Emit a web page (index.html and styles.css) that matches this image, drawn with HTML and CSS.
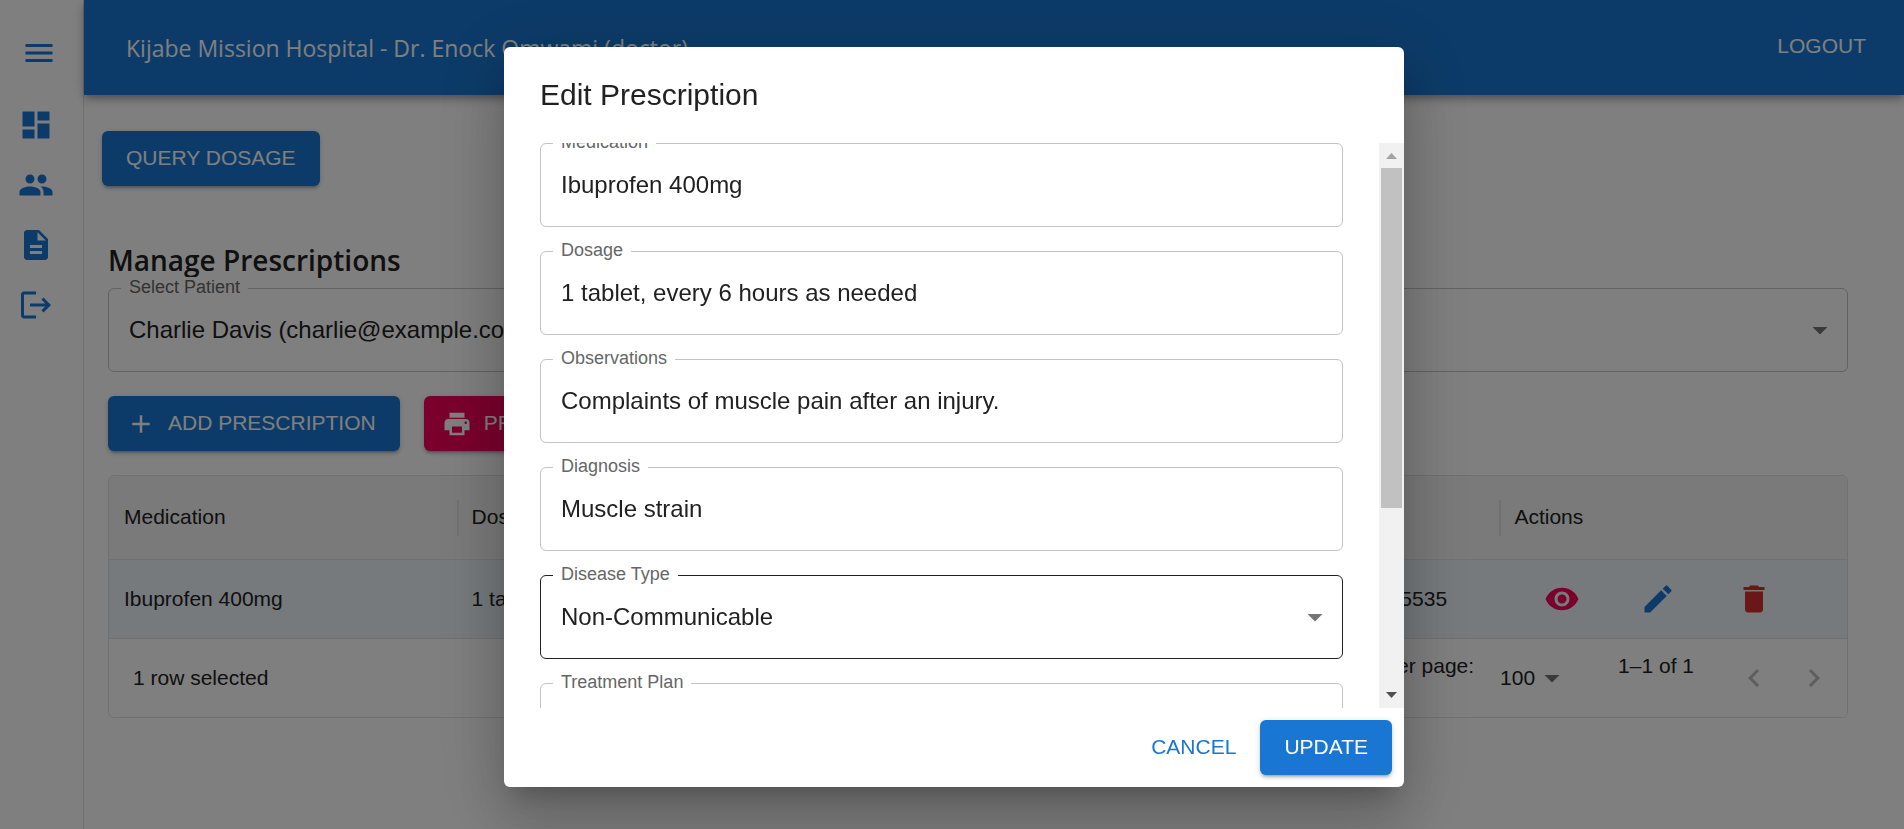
FILE: index.html
```html
<!DOCTYPE html>
<html lang="en">
<head>
<meta charset="utf-8">
<title>Kijabe Mission Hospital</title>
<link rel="stylesheet" href="styles.css">
</head>
<body>
<svg class="sprite" aria-hidden="true">
  <symbol id="i-menu" viewBox="0 0 24 24"><path d="M3 18h18v-2H3v2zm0-5h18v-2H3v2zm0-7v2h18V6H3z"/></symbol>
  <symbol id="i-dashboard" viewBox="0 0 24 24"><path d="M3 13h8V3H3v10zm0 8h8v-6H3v6zm10 0h8V11h-8v10zm0-18v6h8V3h-8z"/></symbol>
  <symbol id="i-people" viewBox="0 0 24 24"><path d="M16 11c1.66 0 2.99-1.34 2.99-3S17.66 5 16 5c-1.66 0-3 1.34-3 3s1.34 3 3 3zm-8 0c1.66 0 2.99-1.34 2.99-3S9.66 5 8 5C6.34 5 5 6.34 5 8s1.34 3 3 3zm0 2c-2.33 0-7 1.17-7 3.5V19h14v-2.5c0-2.33-4.67-3.5-7-3.5zm8 0c-.29 0-.62.02-.97.05 1.16.84 1.97 1.97 1.97 3.45V19h6v-2.5c0-2.33-4.67-3.5-7-3.5z"/></symbol>
  <symbol id="i-description" viewBox="0 0 24 24"><path d="M14 2H6c-1.1 0-1.99.9-1.99 2L4 20c0 1.1.89 2 1.99 2H18c1.1 0 2-.9 2-2V8l-6-6zm2 16H8v-2h8v2zm0-4H8v-2h8v2zm-3-5V3.500L18.500 9H13z"/></symbol>
  <symbol id="i-logout" viewBox="0 0 24 24"><path d="m17 7-1.410 1.410L18.170 11H8v2h10.170l-2.580 2.580L17 17l5-5zM4 5h8V3H4c-1.100 0-2 .9-2 2v14c0 1.100.9 2 2 2h8v-2H4z"/></symbol>
  <symbol id="i-add" viewBox="0 0 24 24"><path d="M19 13h-6v6h-2v-6H5v-2h6V5h2v6h6v2z"/></symbol>
  <symbol id="i-print" viewBox="0 0 24 24"><path d="M19 8H5c-1.660 0-3 1.340-3 3v6h4v4h12v-4h4v-6c0-1.660-1.340-3-3-3zm-3 11H8v-5h8v5zm3-7c-.55 0-1-.45-1-1s.45-1 1-1 1 .45 1 1-.45 1-1 1zm-1-9H6v4h12V3z"/></symbol>
  <symbol id="i-eye" viewBox="0 0 24 24"><path d="M12 4.500C7 4.500 2.730 7.610 1 12c1.730 4.390 6 7.500 11 7.500s9.270-3.110 11-7.500c-1.730-4.390-6-7.500-11-7.500zM12 17c-2.760 0-5-2.240-5-5s2.240-5 5-5 5 2.240 5 5-2.240 5-5 5zm0-8c-1.660 0-3 1.340-3 3s1.340 3 3 3 3-1.340 3-3-1.340-3-3-3z"/></symbol>
  <symbol id="i-edit" viewBox="0 0 24 24"><path d="M3 17.250V21h3.750L17.810 9.940l-3.750-3.750L3 17.250zM20.710 7.040c.39-.39.39-1.020 0-1.410l-2.340-2.340c-.39-.39-1.020-.39-1.410 0l-1.830 1.830 3.750 3.750 1.830-1.830z"/></symbol>
  <symbol id="i-delete" viewBox="0 0 24 24"><path d="M6 19c0 1.100.9 2 2 2h8c1.100 0 2-.9 2-2V7H6v12zM19 4h-3.500l-1-1h-5l-1 1H5v2h14V4z"/></symbol>
  <symbol id="i-down" viewBox="0 0 24 24"><path d="m7 10 5 5 5-5z"/></symbol>
  <symbol id="i-prev" viewBox="0 0 24 24"><path d="M15.410 16.590 10.830 12l4.580-4.590L14 6l-6 6 6 6z"/></symbol>
  <symbol id="i-next" viewBox="0 0 24 24"><path d="M8.590 16.590 13.170 12 8.590 7.410 10 6l6 6-6 6z"/></symbol>
</svg>

<div class="app">
  <aside class="sidebar">
    <button class="side-menu" aria-label="Toggle menu"><svg class="icon"><use href="#i-menu"/></svg></button>
    <nav class="side-nav">
      <a href="#" aria-label="Dashboard"><svg class="icon"><use href="#i-dashboard"/></svg></a>
      <a href="#" aria-label="Patients"><svg class="icon"><use href="#i-people"/></svg></a>
      <a href="#" aria-label="Prescriptions"><svg class="icon"><use href="#i-description"/></svg></a>
      <a href="#" aria-label="Logout"><svg class="icon"><use href="#i-logout"/></svg></a>
    </nav>
  </aside>

  <div class="page">
    <header class="appbar">
      <h1 class="appbar-title">Kijabe Mission Hospital - Dr. Enock Omwami (doctor)</h1>
      <button class="btn-text btn-logout">LOGOUT</button>
    </header>

    <main class="main">
      <button class="btn btn-query">QUERY DOSAGE</button>

      <section class="manage">
        <h2 class="manage-title">Manage Prescriptions</h2>

        <div class="field">
          <label class="field-label" for="patient">Select Patient</label>
          <select class="field-input" id="patient"><option>Charlie Davis (charlie@example.com)</option></select>
          <svg class="icon field-arrow"><use href="#i-down"/></svg>
        </div>

        <div class="toolbar">
          <button class="btn btn-icon"><svg class="icon-sm"><use href="#i-add"/></svg><span>ADD PRESCRIPTION</span></button>
          <button class="btn btn-icon btn-pink"><svg class="icon-sm"><use href="#i-print"/></svg><span>PRINT</span></button>
        </div>

        <div class="grid">
          <table class="grid-table">
            <thead>
              <tr><th>Medication</th><th>Dosage</th><th>Diagnosis</th><th>Patient</th><th>Actions</th></tr>
            </thead>
            <tbody>
              <tr>
                <td>Ibuprofen 400mg</td>
                <td>1 tablet, every 6 hours as needed</td>
                <td>Muscle strain</td>
                <td>670000000000000000005535</td>
                <td>
                  <div class="actions">
                    <button class="act act-view" aria-label="View"><svg class="icon"><use href="#i-eye"/></svg></button>
                    <button class="act act-edit" aria-label="Edit"><svg class="icon"><use href="#i-edit"/></svg></button>
                    <button class="act act-delete" aria-label="Delete"><svg class="icon"><use href="#i-delete"/></svg></button>
                  </div>
                </td>
              </tr>
            </tbody>
          </table>
          <div class="grid-footer">
            <span class="grid-count">1 row selected</span>
            <div class="pager">
              <label class="pager-text" for="rows">Rows per page:</label>
              <div class="pager-size">
                <select id="rows"><option>100</option></select>
                <svg class="icon pager-arrow"><use href="#i-down"/></svg>
              </div>
              <p class="pager-text pager-range">1–1 of 1</p>
              <button class="pager-btn" disabled aria-label="Previous page"><svg class="icon"><use href="#i-prev"/></svg></button>
              <button class="pager-btn" disabled aria-label="Next page"><svg class="icon"><use href="#i-next"/></svg></button>
            </div>
          </div>
        </div>
      </section>
    </main>
  </div>
</div>

<div class="backdrop">
  <div class="dialog" role="dialog" aria-modal="true" aria-labelledby="dialog-title">
    <h2 class="dialog-title" id="dialog-title">Edit Prescription</h2>
    <div class="dialog-body">
      <form class="dialog-form">
        <div class="field">
          <label class="field-label" for="medication">Medication</label>
          <input class="field-input" id="medication" type="text" value="Ibuprofen 400mg">
        </div>
        <div class="field">
          <label class="field-label" for="dosage">Dosage</label>
          <input class="field-input" id="dosage" type="text" value="1 tablet, every 6 hours as needed">
        </div>
        <div class="field">
          <label class="field-label" for="observations">Observations</label>
          <input class="field-input" id="observations" type="text" value="Complaints of muscle pain after an injury.">
        </div>
        <div class="field">
          <label class="field-label" for="diagnosis">Diagnosis</label>
          <input class="field-input" id="diagnosis" type="text" value="Muscle strain">
        </div>
        <div class="field field-active">
          <label class="field-label" for="disease">Disease Type</label>
          <select class="field-input" id="disease"><option>Non-Communicable</option></select>
          <svg class="icon field-arrow"><use href="#i-down"/></svg>
        </div>
        <div class="field">
          <label class="field-label" for="plan">Treatment Plan</label>
          <input class="field-input" id="plan" type="text">
        </div>
      </form>
      <div class="scrollbar" aria-hidden="true">
        <svg class="scroll-arrow scroll-up" viewBox="0 0 25 25"><path d="M7 16l5.500-6 5.500 6z"/></svg>
        <div class="scroll-track"><div class="scroll-thumb"></div></div>
        <svg class="scroll-arrow scroll-down" viewBox="0 0 25 25"><path d="M7 9h11l-5.500 6z"/></svg>
      </div>
    </div>
    <div class="dialog-actions">
      <button class="btn-text">CANCEL</button>
      <button class="btn">UPDATE</button>
    </div>
  </div>
</div>
</body>
</html>
```
FILE: styles.css
```css
* { box-sizing: border-box; }

body {
  margin: 0;
  background: #fff;
  color: #212121;
  font-family: "Liberation Sans", Arial, sans-serif;
  font-size: 21px;
}

h1, h2, p { margin: 0; }

button, input, select { font: inherit; color: inherit; }

button {
  border: 0;
  padding: 0;
  background: none;
}

.sprite {
  position: absolute;
  width: 0;
  height: 0;
}

.icon, .icon-sm {
  display: block;
  flex: none;
  width: 36px;
  height: 36px;
  fill: currentColor;
}

.icon-sm {
  width: 30px;
  height: 30px;
}

.app {
  display: flex;
  min-height: 100vh;
}

.sidebar {
  flex: none;
  width: 84px;
  padding-top: 35px;
  border-right: 1px solid #e0e0e0;
  color: #1976d2;
}

.side-menu {
  display: block;
  margin: 0 0 24px 21px;
}

.side-nav a {
  display: flex;
  align-items: center;
  height: 60px;
  padding-left: 18px;
  color: inherit;
}

.page {
  flex: 1;
  min-width: 0;
}

.appbar {
  display: flex;
  align-items: center;
  justify-content: space-between;
  height: 95px;
  padding: 0 24px 0 42px;
  background: #1976d2;
  color: #fff;
  box-shadow: 0 3px 6px -1px rgba(0, 0, 0, .2), 0 6px 8px rgba(0, 0, 0, .14), 0 1px 15px rgba(0, 0, 0, .12);
}

.appbar-title {
  font-family: "Segoe UI", "Open Sans", "Noto Sans", sans-serif;
  font-size: 23px;
  font-weight: 400;
  line-height: 36px;
}

.btn, .btn-text {
  display: inline-flex;
  align-items: center;
  justify-content: center;
  height: 55px;
  min-width: 96px;
  border-radius: 6px;
  white-space: nowrap;
}

.btn {
  padding: 0 24px 2px;
  background: #1976d2;
  color: #fff;
  box-shadow: 0 4px 2px -3px rgba(0, 0, 0, .2), 0 3px 3px rgba(0, 0, 0, .14), 0 1px 7px rgba(0, 0, 0, .12);
}

.btn-text {
  padding: 0 12px 2px;
  color: #1976d2;
}

.btn-logout {
  padding: 0 14px 3px;
  color: inherit;
}

.btn-icon {
  gap: 12px;
  padding: 0 24px 0 18px;
}

.btn-icon span { padding-bottom: 2px; }

.btn-pink { background: #f50057; }

.main { padding: 36px 18px; }

.manage { padding: 54px 38px 24px 6px; }

.manage-title {
  padding-top: 2px;
  margin-bottom: 10px;
  font-family: "Segoe UI", "Open Sans", "Noto Sans", sans-serif;
  font-size: 28px;
  font-weight: 600;
  line-height: 36px;
}

.field {
  position: relative;
  background: #fff;
}

.field-label {
  position: absolute;
  top: -11px;
  left: 13px;
  padding: 0 8px;
  background: #fff;
  color: #666;
  font-size: 18px;
  line-height: 20px;
}

.field-input {
  display: block;
  width: 100%;
  height: 84px;
  padding: 0 20px;
  border: 1px solid #c4c4c4;
  border-radius: 6px;
  background: transparent;
  font-size: 24px;
  appearance: none;
  outline: 0;
}

select.field-input { padding-bottom: 2px; }

.field-active .field-input { border-color: #212121; }

.field-arrow {
  position: absolute;
  top: 24px;
  right: 10px;
  color: #757575;
  pointer-events: none;
}

.toolbar {
  display: flex;
  gap: 24px;
  margin: 24px 0;
}

.grid {
  border: 1px solid #e0e0e0;
  border-radius: 6px;
  overflow: hidden;
}

.grid-table {
  width: 100%;
  table-layout: fixed;
  border-collapse: separate;
  border-spacing: 0;
}

.grid-table th, .grid-table td {
  padding: 0 15px;
  border-bottom: 1px solid #e0e0e0;
  text-align: left;
  font-weight: 400;
  white-space: nowrap;
  overflow: hidden;
  text-overflow: ellipsis;
}

.grid-table th {
  height: 84px;
  padding-bottom: 1px;
  background: #f5f5f5;
}

.grid-table th + th {
  background: linear-gradient(#e0e0e0, #e0e0e0) left center / 2px 36px no-repeat #f5f5f5;
}

.grid-table td {
  height: 79px;
  background: #edf4fb;
}

.actions { display: flex; }

.act {
  display: flex;
  justify-content: center;
  width: 96px;
}

.act-view { color: #f50057; }
.act-edit { color: #1976d2; }
.act-delete { color: #d32f2f; }

.grid-footer {
  display: flex;
  align-items: center;
  justify-content: space-between;
  height: 78px;
  padding: 0 3px 0 24px;
}

.grid-count { padding-bottom: 1px; }

.pager {
  display: flex;
  align-items: center;
}

.pager-text { padding-bottom: 25px; }

.pager-size {
  position: relative;
  margin: 0 42px 0 14px;
}

.pager-size select {
  display: block;
  width: 88px;
  height: 36px;
  padding: 0 12px 1px;
  border: 0;
  background: transparent;
  appearance: none;
}

.pager-arrow {
  position: absolute;
  top: 0;
  right: 6px;
  color: #757575;
  pointer-events: none;
}

.pager-range { padding-right: 30px; }

.pager-btn {
  display: flex;
  justify-content: center;
  width: 60px;
  padding: 12px 0;
  color: #bdbdbd;
}

.backdrop {
  position: fixed;
  inset: 0;
  display: flex;
  justify-content: center;
  padding: 47px 48px 42px;
  background: rgba(0, 0, 0, .5);
}

.dialog {
  display: flex;
  flex-direction: column;
  width: 100%;
  max-width: 900px;
  margin-right: -4px;
  border-radius: 6px;
  background: #fff;
  box-shadow: 0 16px 22px -10px rgba(0, 0, 0, .2), 0 36px 57px 4px rgba(0, 0, 0, .14), 0 14px 69px 12px rgba(0, 0, 0, .12);
}

.dialog-title {
  padding: 24px 36px;
  font-size: 30px;
  font-weight: 400;
  line-height: 48px;
}

.dialog-body {
  display: flex;
  flex: 1;
  min-height: 0;
}

.dialog-form {
  display: flex;
  flex: 1;
  flex-direction: column;
  gap: 24px;
  padding: 0 36px 30px;
  overflow-y: auto;
  scrollbar-width: none;
}

.scrollbar {
  display: flex;
  flex-direction: column;
  width: 25px;
  background: #f1f1f1;
}

.scroll-arrow {
  display: block;
  width: 25px;
  height: 25px;
}

.scroll-up { fill: #a3a3a3; }
.scroll-down { fill: #505050; }

.scroll-track {
  flex: 1;
  padding: 0 2px;
}

.scroll-thumb {
  height: 66%;
  background: #c1c1c1;
}

.dialog-actions {
  display: flex;
  justify-content: flex-end;
  gap: 12px;
  padding: 12px;
}
```
